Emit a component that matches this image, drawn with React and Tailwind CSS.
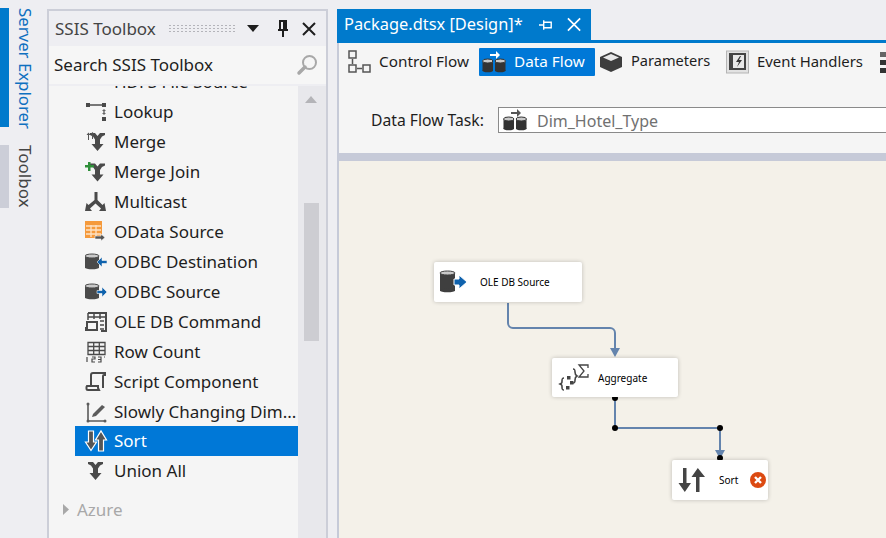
import React from 'react';

const dark = '#4a4a4a';

// cylinder used by the source / destination icons
const Can = ({ x = 0, y = 0, w = 12, h = 14, fill = dark }) => (
  <g>
    <rect x={x} y={y + 2} width={w} height={h - 3} fill={fill} />
    <ellipse cx={x + w / 2} cy={y + h - 1.5} rx={w / 2} ry={1.8} fill={fill} />
    <ellipse cx={x + w / 2} cy={y + 2} rx={w / 2} ry={2} fill="#c9c9c9" stroke={fill} strokeWidth="1" />
  </g>
);

const BlueArrow = ({ x, y, flip }) => (
  <path
    d="M0 3.5h5V0l5 5-5 5V6.5H0z"
    fill="#0f62ad"
    stroke="#f5f5f5"
    strokeWidth="0.6"
    transform={flip ? `translate(${x + 10} ${y}) scale(-1 1)` : `translate(${x} ${y})`}
  />
);

const UnionShape = ({ color = dark }) => (
  <path
    d="M2 2h5l2.500 3L12 2h5v2l-3 1.500-2 3V13h3.500l-6 7-6-7H7V8.500l-2-3-3-1.500z"
    fill={color}
  />
);

const icons = {
  hdfs: (
    <svg width="22" height="20" viewBox="0 0 22 20">
      <rect x="1" y="8" width="12" height="5" fill={dark} />
      <path d="M12 10h6v-2l3 3-3 3v-2h-6z" fill="#3f76b8" />
    </svg>
  ),
  lookup: (
    <svg width="22" height="22" viewBox="0 0 22 22">
      <rect x="1" y="2" width="4" height="4" fill={dark} />
      <rect x="17" y="2" width="4" height="4" fill={dark} />
      <rect x="5" y="3" width="12" height="2" fill="#777" />
      <path d="M19 8l2 2h-4zM19 14l2-2h-4z" fill="#666" />
      <rect x="18.300" y="9" width="1.400" height="4" fill="#666" />
      <rect x="17" y="16" width="4" height="4" fill={dark} />
    </svg>
  ),
  merge: (
    <svg width="22" height="22" viewBox="0 0 22 22">
      <g transform="translate(3 0)"><UnionShape /></g>
      <path d="M3 9V4H1.500L3.500 1.500 5.500 4H4v5zM7 8V3H5.800L7.500 1l1.700 2H8v5z" fill="#555" />
    </svg>
  ),
  mergeJoin: (
    <svg width="22" height="22" viewBox="0 0 22 22">
      <g transform="translate(3 0.500)"><UnionShape /></g>
      <path d="M3 1h2.500v3H9v2.500H5.500V10H3V6.500H0V4h3z" fill="#2f8f3a" />
    </svg>
  ),
  multicast: (
    <svg width="22" height="22" viewBox="0 0 22 22">
      <path d="M9.500 1h3v8l5 5 2-2 1.500 8h-7l2-2.500-5.500-5-5.500 5 2 2.500H0l1.500-8 2 2 6-5z" fill={dark} />
    </svg>
  ),
  odata: (
    <svg width="22" height="22" viewBox="0 0 22 22">
      <rect x="0" y="0" width="17" height="17" fill="#f59a3c" />
      <path d="M1 5h15M1 9h15M1 13h15M6 4v12M11 4v12" stroke="#fde2c4" strokeWidth="1.300" />
      <path d="M10 15h6v-2l4 3.500-4 3.500v-2h-6z" fill="#555" stroke="#f5f5f5" strokeWidth="0.600" />
    </svg>
  ),
  odbcDest: (
    <svg width="22" height="18" viewBox="0 0 22 18">
      <Can x={0} y={1} w={14} h={15} />
      <BlueArrow x={12} y={4} flip />
    </svg>
  ),
  odbcSource: (
    <svg width="22" height="18" viewBox="0 0 22 18">
      <Can x={0} y={1} w={14} h={15} />
      <BlueArrow x={12} y={4} />
    </svg>
  ),
  oleCmd: (
    <svg width="22" height="22" viewBox="0 0 22 22">
      <path d="M3 2h18v18h-5" fill="none" stroke={dark} strokeWidth="2" />
      <path d="M3 2v7M3 6h18M9 2v6M15 2v6" stroke={dark} strokeWidth="1.500" />
      <path d="M2 11h10v8H0v-2h2z" fill="none" stroke={dark} strokeWidth="2" />
      <path d="M15 10h4M15 14h4M15 18h4" stroke={dark} strokeWidth="1.500" />
    </svg>
  ),
  rowCount: (
    <svg width="22" height="22" viewBox="0 0 22 22">
      <path d="M3 1.500h17v12H3zM3 5.500h17M3 9.500h17M8.700 1.500v12M14.300 1.500v12" fill="none" stroke={dark} strokeWidth="1.300" />
      <path d="M2 16v5M7 16h3v2H7v3h3M13 16h3v5h-3M13 18.500h3M20 16h-1" fill="none" stroke={dark} strokeWidth="1.200" />
    </svg>
  ),
  script: (
    <svg width="22" height="22" viewBox="0 0 22 22">
      <path d="M6 15V4a2 2 0 0 1 2-2h12v2h-1a1 1 0 0 0-1 1v12" fill="none" stroke={dark} strokeWidth="2" />
      <path d="M2 15h11v2l1 2H3a1.500 1.500 0 0 1-1.500-1.500V16z" fill="none" stroke={dark} strokeWidth="2" />
    </svg>
  ),
  scd: (
    <svg width="22" height="22" viewBox="0 0 22 22">
      <path d="M3 3v17h16" fill="none" stroke="#5b5b5b" strokeWidth="1.600" />
      <circle cx="3" cy="3" r="1.500" fill="#5b5b5b" />
      <circle cx="3" cy="20" r="1.500" fill="#5b5b5b" />
      <circle cx="20" cy="20" r="1.500" fill="#5b5b5b" />
      <path d="M8 13l9-9 3 2-9 9-4 1z" fill="#5b5b5b" />
    </svg>
  ),
  sort: (
    <svg width="24" height="24" viewBox="0 0 24 24">
      <path d="M4.500 2h5v11h3L7 21.500 1.500 13h3z" fill="#555" stroke="#fff" strokeWidth="1.200" />
      <path d="M14.500 22h5V11h3L17 2l-5.500 9h3z" fill="#555" stroke="#fff" strokeWidth="1.200" />
    </svg>
  ),
  union: (
    <svg width="22" height="22" viewBox="0 0 22 22">
      <g transform="translate(1 0)"><UnionShape /></g>
    </svg>
  ),
};

const tools = [
  ['HDFS File Source', 'hdfs'],
  ['Lookup', 'lookup'],
  ['Merge', 'merge'],
  ['Merge Join', 'mergeJoin'],
  ['Multicast', 'multicast'],
  ['OData Source', 'odata'],
  ['ODBC Destination', 'odbcDest'],
  ['ODBC Source', 'odbcSource'],
  ['OLE DB Command', 'oleCmd'],
  ['Row Count', 'rowCount'],
  ['Script Component', 'script'],
  ['Slowly Changing Dim...', 'scd'],
  ['Sort', 'sort'],
  ['Union All', 'union'],
];

const ToolRow = ({ name, icon }) => {
  const selected = name === 'Sort';
  // the row above Sort is one pixel shorter in the picture
  const height = icon === 'scd' ? 'h-[29px]' : 'h-[30px]';
  return (
    <div className={`flex ${height} w-[223px] items-center ${selected ? 'bg-[#0078d7] text-white' : 'text-[#1e1e1e]'}`}>
      <div className="flex w-[39px] shrink-0 justify-center pl-[2px]">{icons[icon]}</div>
      <span className="whitespace-nowrap">{name}</span>
    </div>
  );
};

const DataFlowIcon = ({ light }) => (
  <svg className="shrink-0" width="25" height="24" viewBox="0 0 25 24">
    <path d="M8 4h6V1l4 4-4 4V6H8z" fill={light ? '#fff' : '#555'} />
    <Can x={0.500} y={9} w={10.500} h={13} fill="#333" />
    <Can x={13} y={9} w={10.500} h={13} fill="#333" />
  </svg>
);

const ControlFlowIcon = () => (
  <svg className="shrink-0" width="24" height="24" viewBox="0 0 24 24" fill="none" stroke="#555" strokeWidth="1.500">
    <rect x="2" y="1" width="7" height="7" />
    <rect x="2" y="15" width="7" height="7" />
    <rect x="16" y="15" width="7" height="7" />
    <path d="M5.500 9v5M10 18.500h5" />
  </svg>
);

const ParamsIcon = () => (
  <svg className="shrink-0" width="24" height="24" viewBox="0 0 24 24">
    <path d="M12 2l11 5v10l-11 5-11-5V7z" fill="#3d3d3d" />
    <path d="M12 4l8 3.500-8 3.500-8-3.500z" fill="#e8e8e8" />
  </svg>
);

const EventIcon = () => (
  <svg className="shrink-0" width="23" height="24" viewBox="0 0 23 24">
    <rect x="0.500" y="1" width="22" height="22" fill="#e2e2e2" stroke="#b5b5b5" />
    <rect x="3" y="3" width="17" height="17" fill="#444" />
    <rect x="7" y="5" width="11" height="13" fill="#e8e8e8" />
    <path d="M14 6l-4 6h3l-2 5 5-7h-3l2-4z" fill="#333" />
  </svg>
);

const Node = ({ className, icon, label, labelClass, children }) => (
  <div className={`absolute flex items-center rounded-[2px] bg-white shadow-[0_0_4px_rgba(0,0,0,0.22)] ${className}`}>
    <div className="flex shrink-0 items-center">{icon}</div>
    <span className={`pt-[1px] text-[10px] whitespace-nowrap text-black ${labelClass}`}>{label}</span>
    {children}
  </div>
);

const Dot = ({ cx, cy }) => <circle cx={cx} cy={cy} r="3" fill="#000" />;

export default function App() {
  return (
    <div className="flex h-[538px] w-[886px] overflow-hidden bg-[#eeeef2] font-['Noto_Sans',sans-serif] text-[17px]">
      {/* side rail */}
      <div className="flex w-[47px] shrink-0 flex-col pt-[8px]">
        <div className="flex h-[119px] border-l-[9px] border-[#007acc]">
          <span className="pl-[5px] text-[16.8px] leading-[22px] whitespace-nowrap text-[#0e70c0] [writing-mode:vertical-rl]">Server Explorer</span>
        </div>
        <div className="mt-[18px] flex h-[63px] border-l-[9px] border-[#ccced8]">
          <span className="pl-[5px] text-[17px] leading-[22px] whitespace-nowrap text-[#444] [writing-mode:vertical-rl]">Toolbox</span>
        </div>
      </div>

      {/* toolbox panel */}
      <div className="mt-[9px] flex h-[529px] w-[281px] shrink-0 flex-col border-2 border-b-0 border-[#ccced8]">
        <div className="flex h-[35px] shrink-0 items-center pr-[10px] pl-[6px] text-[#444]">
          <span className="whitespace-nowrap">SSIS Toolbox</span>
          <div className="mx-[12px] h-[9px] flex-1 bg-[radial-gradient(#b4b4ba_1px,transparent_1px)] bg-[length:4px_3px]" />
          <svg width="12" height="7" viewBox="0 0 12 7"><path d="M0 0h12L6 7z" fill="#1e1e1e" /></svg>
          <svg className="ml-[18px]" width="12" height="18" viewBox="0 0 12 18">
            <path d="M3 1h6v9H3zM1 10h10M6 10v7" fill="none" stroke="#1e1e1e" strokeWidth="2" />
            <rect x="6" y="2" width="2.500" height="8" fill="#1e1e1e" />
          </svg>
          <svg className="ml-[13px]" width="14" height="14" viewBox="0 0 14 14"><path d="M1 1l12 12M13 1L1 13" stroke="#1e1e1e" strokeWidth="2" /></svg>
        </div>
        <div className="flex h-[38px] shrink-0 items-center justify-between bg-[#f6f6f6] pr-[8px] pl-[5px] text-[#1e1e1e]">
          <span className="whitespace-nowrap">Search SSIS Toolbox</span>
          <svg width="22" height="22" viewBox="0 0 22 22">
            <circle cx="13.500" cy="8.500" r="6.500" fill="#f6f6f6" stroke="#a8a8a8" strokeWidth="2" />
            <path d="M9 13l-6 6" stroke="#a8a8a8" strokeWidth="3.500" strokeLinecap="round" />
          </svg>
        </div>
        <div className="mt-[2px] flex min-h-0 flex-1">
          <div className="flex-1 overflow-hidden bg-[#f5f5f5] pl-[26px]">
            <div className="-mt-[19px]">
              {tools.map(([name, icon]) => <ToolRow key={name} name={name} icon={icon} />)}
              <div className="mt-[11px] flex items-center text-[#a8a8a8]">
                <svg className="-ml-[12px] mr-[8px]" width="6" height="11" viewBox="0 0 6 11"><path d="M0 0l6 5.500L0 11z" fill="#a8a8a8" /></svg>
                <span>Azure</span>
              </div>
            </div>
          </div>
          <div className="flex w-[28px] shrink-0 flex-col items-center bg-[#e8e8ec] pr-[2px]">
            <svg className="mt-[10px]" width="12" height="7" viewBox="0 0 12 7"><path d="M6 0l6 7H0z" fill="#b4b4b8" /></svg>
            <div className="mt-[100px] h-[138px] w-[15px] bg-[#cdcdd2]" />
          </div>
        </div>
      </div>

      {/* designer */}
      <div className="ml-[9px] flex min-w-0 flex-1 flex-col pt-[9px]">
        <div className="flex h-[31px] w-[254px] shrink-0 items-center bg-[#007acc] pr-[10px] pl-[7px] text-white">
          <span className="text-[16.4px] whitespace-nowrap">Package.dtsx [Design]*</span>
          <svg className="ml-[16px]" width="14" height="12" viewBox="0 0 14 12">
            <path d="M0 6h5M5 1v10M5 3h8v6H5" fill="none" stroke="#fff" strokeWidth="1.500" />
          </svg>
          <svg className="ml-[15px]" width="15" height="15" viewBox="0 0 15 15"><path d="M1 1l13 13M14 1L1 14" stroke="#fff" strokeWidth="1.800" /></svg>
        </div>
        <div className="h-[3px] shrink-0 bg-[#007acc]" />
        <div className="flex min-h-0 flex-1 flex-col border-l-[2px] border-[#c6cad8]">
          <div className="h-[110px] shrink-0 bg-[#f5f5f5] text-[#1e1e1e]">
            <div className="mt-[5px] flex h-[28px] items-center pl-[8px] text-[15.3px] whitespace-nowrap">
              <ControlFlowIcon />
              <span className="ml-[8px] w-[90px] shrink-0 pb-[2px]">Control Flow</span>
              <div className="ml-[10px] flex h-[28px] w-[116px] shrink-0 items-center rounded-[1px] bg-[#0078d7] pl-[3px] text-white">
                <DataFlowIcon light />
                <span className="ml-[7px] pb-[2px]">Data Flow</span>
              </div>
              <div className="ml-[4px] shrink-0"><ParamsIcon /></div>
              <span className="ml-[8px] w-[79px] shrink-0 pb-[2px] text-[14.6px]">Parameters</span>
              <div className="ml-[16px] shrink-0"><EventIcon /></div>
              <span className="ml-[8px] w-[106px] shrink-0 pb-[2px] text-[14.9px]">Event Handlers</span>
              <svg className="ml-[17px] shrink-0" width="8" height="24" viewBox="0 0 8 24">
                <rect x="0" y="2" width="6" height="5" fill="#666" />
                <rect x="0" y="10" width="6" height="5" fill="#333" />
                <rect x="0" y="18" width="6" height="5" fill="#333" />
              </svg>
            </div>
            <div className="mt-[31px] flex items-center pl-[32px]">
              <span className="w-[127px] shrink-0 pt-[2px] text-[15.7px] whitespace-nowrap">Data Flow Task:</span>
              <div className="flex h-[26px] flex-1 items-center border border-r-0 border-[#8a8a8a] bg-white pl-[4px]">
                <DataFlowIcon />
                <span className="ml-[9px] pt-[1px] text-[16px] whitespace-nowrap text-[#717171]">Dim_Hotel_Type</span>
              </div>
            </div>
          </div>
          <div className="h-[8px] shrink-0 bg-[#c6cad8]" />
          <div className="relative min-h-0 flex-1 bg-[#f4f1e9]">
            <svg className="absolute inset-0" width="546" height="377" viewBox="0 0 546 377">
              <path d="M169 142v20a5 5 0 0 0 5 5h97a5 5 0 0 1 5 5v18" fill="none" stroke="#6484ad" strokeWidth="2" />
              <path d="M271 187h10l-5 9z" fill="#6484ad" />
              <path d="M276 237v30h105v24" fill="none" stroke="#6484ad" strokeWidth="2" />
              <path d="M376 289h10l-5 9z" fill="#6484ad" />
              <Dot cx={276} cy={237} />
              <Dot cx={276} cy={267} />
              <Dot cx={381} cy={267} />
              <Dot cx={381} cy={297} />
            </svg>
            <Node
              className="top-[101px] left-[95px] h-[40px] w-[148px] pl-[5px]"
              icon={
                <svg width="30" height="24" viewBox="0 0 30 24">
                  <Can x={1} y={1} w={15} h={21} fill="#3f3f3f" />
                  <path d="M15 9h5V5l8 7-8 7v-4h-5z" fill="#0f62ad" stroke="#fff" strokeWidth="1" />
                </svg>
              }
              label="OLE DB Source"
              labelClass="ml-[11px]"
            />
            <Node
              className="top-[197px] left-[213px] h-[39px] w-[126px] pl-[5px]"
              icon={
                <svg width="32" height="30" viewBox="0 0 32 30" fill="none" stroke="#444" strokeWidth="1.600">
                  <path d="M7 15c-2 0-2 1-2 3s0 2-2 3c2 1 2 1 2 3s0 3 2 3" />
                  <rect x="10" y="13" width="3.500" height="3.500" fill="#444" stroke="none" />
                  <rect x="13" y="18" width="3.500" height="3.500" fill="#444" stroke="none" />
                  <rect x="9" y="23" width="3.500" height="3.500" fill="#444" stroke="none" />
                  <path d="M16 6c2 0 2 1 2 3s0 3 2 4c-2 1-2 2-2 4s0 3-2 3" />
                  <path d="M31 5V2H22l5 6-5 6h9v-3" strokeWidth="1.300" />
                </svg>
              }
              label="Aggregate"
              labelClass="ml-[9px]"
            />
            <Node
              className="top-[299px] left-[333px] h-[40px] w-[96px] pl-[6px]"
              icon={
                <svg width="28" height="26" viewBox="0 0 28 26" fill="#444">
                  <path d="M5 1h3.500v15H13L6.800 25 0.500 16H5z" />
                  <path d="M18 25h3.500V10H27L19.800 1 13.500 10H18z" />
                </svg>
              }
              label="Sort"
              labelClass="ml-[13px]"
            >
              <svg className="ml-[12px]" width="16" height="16" viewBox="0 0 16 16">
                <circle cx="8" cy="8" r="8" fill="#dc4a12" />
                <path d="M5 5l6 6M11 5l-6 6" stroke="#fff" strokeWidth="2.400" />
              </svg>
            </Node>
          </div>
        </div>
      </div>
    </div>
  );
}
